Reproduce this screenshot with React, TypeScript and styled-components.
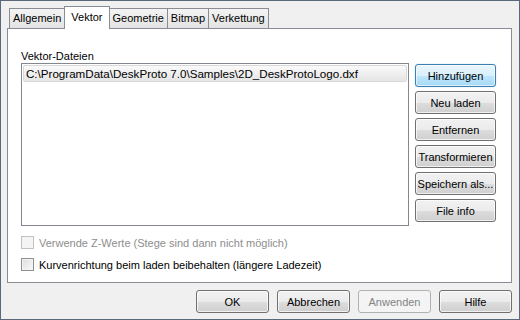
import styled, {createGlobalStyle, css} from "styled-components";

const GlobalStyle = createGlobalStyle`
  html, body {
    margin: 0;
    padding: 0;
    background: #f0f0f0;
  }

  body {
    font-family: "Liberation Sans", Arial, sans-serif;
    font-size: 11px;
    color: #000;
  }
`;

const Window = styled.div`
  box-sizing: border-box;
  width: 520px;
  height: 320px;
  border: 1px solid #59687a;
  background: #f0f0f0;
  padding: 5px 7px 0 6px;
  display: flex;
  flex-direction: column;
`;

const TabStrip = styled.div`
  display: flex;
  align-items: flex-start;
  height: 22px;
  padding-left: 2px;
`;

const Tab = styled.div<{ $active?: boolean }>`
  box-sizing: border-box;
  height: 20px;
  margin-top: 2px;
  padding: 0 3px;
  line-height: 19px;
  border: 1px solid #898c95;
  border-bottom: none;
  margin-left: -1px;
  background: linear-gradient(#f3f3f3, #e3e3e3);
  cursor: default;

  &:first-child {
    margin-left: 0;
  }

  ${({$active}) => $active && css`
    position: relative;
    z-index: 2;
    height: 23px;
    margin-top: 0;
    padding: 0 6px;
    line-height: 20px;
    background: #fff;
  `}
`;

const Panel = styled.div`
  box-sizing: border-box;
  height: 255px;
  background: #fff;
  border: 1px solid #898c95;
  padding: 20px 0 0 13px;
`;

const SectionLabel = styled.div`
  height: 14px;
  line-height: 14px;
`;

const ContentRow = styled.div`
  display: flex;
  align-items: flex-start;
  gap: 6px;
`;

const ListBox = styled.div`
  box-sizing: border-box;
  width: 388px;
  height: 163px;
  border: 1px solid #828790;
  padding: 1px;
`;

const ListItem = styled.div`
  box-sizing: border-box;
  height: 17px;
  line-height: 15px;
  padding-left: 2px;
  border: 1px solid #d9d9d9;
  border-radius: 2px;
  background: linear-gradient(#fafafa, #e5e5e5);
  white-space: nowrap;
  font-size: 11.6px;
`;

const ButtonColumn = styled.div`
  display: flex;
  flex-direction: column;
  gap: 4px;
  margin-top: 1px;
  width: 81px;
`;

type ButtonKind = "normal" | "default" | "disabled";

const Button = styled.button<{ $kind?: ButtonKind; $width?: number }>`
  box-sizing: border-box;
  width: ${({$width}) => $width ?? 81}px;
  height: 23px;
  padding: 0;
  font-family: inherit;
  font-size: 11px;
  color: #000;
  border: 1px solid #707070;
  border-radius: 3px;
  background: linear-gradient(#f2f2f2 0%, #ebebeb 50%, #dddddd 51%, #cfcfcf 100%);
  box-shadow: inset 0 0 0 1px rgba(255, 255, 255, 0.7);
  white-space: nowrap;

  ${({$kind}) => $kind === "default" && css`
    border-color: #3c7fb1;
    background: linear-gradient(#eaf6fd 0%, #d9f0fc 50%, #bee6fd 51%, #a7d9f5 100%);
    box-shadow: inset 0 0 0 1px rgba(255, 255, 255, 0.6), 0 0 1px #7ec4ec;
  `}

  ${({$kind}) => $kind === "disabled" && css`
    color: #838383;
    border-color: #adb2b5;
    background: #f4f4f4;
    box-shadow: none;
  `}
`;

const CheckRow = styled.label<{ $disabled?: boolean; $gap: number }>`
  display: flex;
  align-items: center;
  gap: 5px;
  height: 13px;
  margin-top: ${({$gap}) => $gap}px;
  color: ${({$disabled}) => ($disabled ? "#8d8d8d" : "#000")};
`;

const CheckBox = styled.span<{ $disabled?: boolean }>`
  box-sizing: border-box;
  width: 13px;
  height: 13px;
  border: 1px solid ${({$disabled}) => ($disabled ? "#c2c2c2" : "#8e8f8f")};
  background: ${({$disabled}) => ($disabled
		? "#f4f4f4"
		: "linear-gradient(135deg, #dcdcdc, #fbfbfb)")};
  box-shadow: inset 0 0 0 1px #f4f4f4;
  flex-shrink: 0;
`;

const Footer = styled.div`
  display: flex;
  justify-content: flex-end;
  gap: 8px;
  margin-top: 7px;
`;

const tabs = ["Allgemein", "Vektor", "Geometrie", "Bitmap", "Verkettung"];
const sideButtons = ["Hinzufügen", "Neu laden", "Entfernen", "Transformieren", "Speichern als...", "File info"];

export default function App() {
	return (
		<>
			<GlobalStyle/>
			<Window>
				<TabStrip>
					{tabs.map(tab => (
						<Tab key={tab} $active={tab === "Vektor"}>{tab}</Tab>
					))}
				</TabStrip>
				<Panel>
					<SectionLabel>Vektor-Dateien</SectionLabel>
					<ContentRow>
						<ListBox>
							<ListItem>C:\ProgramData\DeskProto 7.0\Samples\2D_DeskProtoLogo.dxf</ListItem>
						</ListBox>
						<ButtonColumn>
							{sideButtons.map((label, i) => (
								<Button key={label} $kind={i === 0 ? "default" : "normal"}>{label}</Button>
							))}
						</ButtonColumn>
					</ContentRow>
					<CheckRow $disabled $gap={10}>
						<CheckBox $disabled/>
						Verwende Z-Werte (Stege sind dann nicht möglich)
					</CheckRow>
					<CheckRow $gap={9}>
						<CheckBox/>
						Kurvenrichtung beim laden beibehalten (längere Ladezeit)
					</CheckRow>
				</Panel>
				<Footer>
					<Button $width={73}>OK</Button>
					<Button $width={73}>Abbrechen</Button>
					<Button $width={73} $kind="disabled">Anwenden</Button>
					<Button $width={73}>Hilfe</Button>
				</Footer>
			</Window>
		</>
	);
}
